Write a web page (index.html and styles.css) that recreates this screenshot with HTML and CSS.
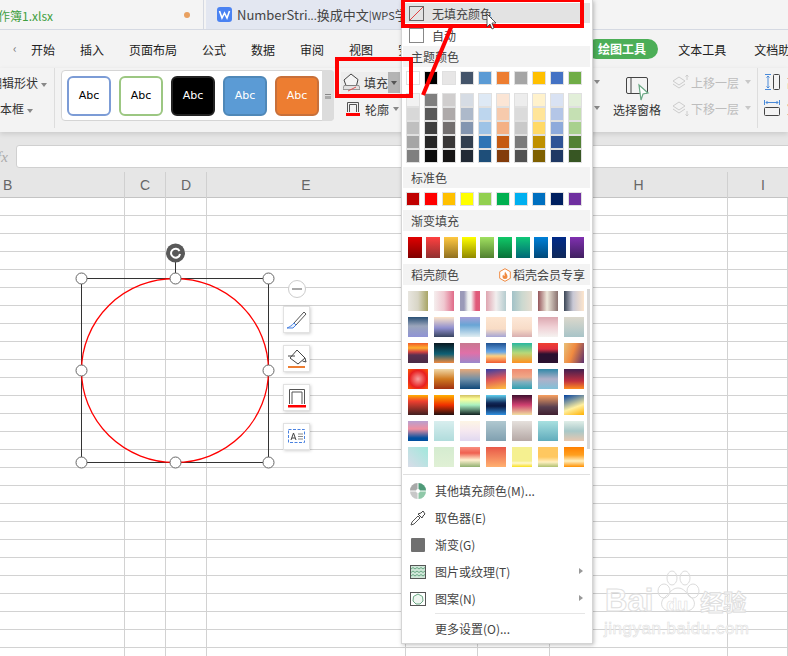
FILE: index.html
```html
<!DOCTYPE html>
<html lang="zh-CN">
<head>
    <meta charset="UTF-8">
    <title>工作簿1.xlsx</title>
    <link rel="stylesheet" href="styles.css">
</head>
<body>
<div class="app">
    <div class="title-bar">
        <div class="file-tab active">
            <span class="file-name">工作簿1.xlsx</span>
            <span class="dirty-dot"></span>
        </div>
        <div class="file-tab other">
            <svg class="wps-logo" width="15" height="15" viewBox="0 0 15 15"><rect width="15" height="15" rx="3" fill="#4a82f2"/><path d="M2.5 4l2.5 7 2.5-5 2.5 5 2.5-7" fill="none" stroke="#fff" stroke-width="1.6"/></svg>
            <span class="file-name-2">NumberStri<span class="tight">...</span>换成中文<span class="tight">|WPS</span>学</span>
        </div>
    </div>

    <div class="menu-tabs">
        <span class="back-arrow">‹</span>
        <span>开始</span><span>插入</span><span>页面布局</span><span>公式</span><span>数据</span><span>审阅</span><span>视图</span><span>安全</span>
        <span class="pill">绘图工具</span>
        <span class="after-pill">文本工具</span>
        <span class="last-tab">文档助手</span>
    </div>

    <div class="ribbon">
        <div class="edit-group">
            <div class="edit-item">编辑形状 <i class="caret"></i></div>
            <div class="edit-item second">文本框 <i class="caret"></i></div>
        </div>
        <div class="gallery">
            <div class="abc a1">Abc</div>
            <div class="abc a2">Abc</div>
            <div class="abc a3">Abc</div>
            <div class="abc a4">Abc</div>
            <div class="abc a5">Abc</div>
            <div class="gallery-scroll"><i></i></div>
        </div>
        <div class="fill-group">
            <div class="fill-btn">
                <span class="fill-main">
                    <svg width="17" height="19" viewBox="0 0 17 19"><path d="M8 1l7 5.500-1.500 6H3L1 7z" fill="#f4f4f4" stroke="#444"/><path d="M1 12.500h15l1 4H0z" fill="#e2e2e2" stroke="#777" stroke-width=".7"/><path d="M5 18l8-4" stroke="#e05050"/></svg>
                    填充
                </span>
                <span class="fill-drop"><i class="caret dark"></i></span>
            </div>
            <div class="line-btn">
                <svg width="16" height="16" viewBox="0 0 16 16"><path d="M2.500 11V1.500h11V11M4.500 11V3.500h7V11" fill="none" stroke="#555"/><rect x="1" y="12" width="14" height="3" fill="#f00"/></svg>
                轮廓 <i class="caret"></i>
            </div>
        </div>
        <div class="carets"><i class="caret"></i><i class="caret"></i></div>
        <div class="pane-btn">
            <svg width="26" height="26" viewBox="0 0 26 26"><rect x=".5" y=".5" width="21" height="16" rx="1.500" fill="none" stroke="#444"/><path d="M5 1v15" stroke="#444"/><path d="M13 8l9 8-5 1-2 6z" fill="#fff" stroke="#6aa884" stroke-width="1.200"/></svg>
            <span>选择窗格</span>
        </div>
        <div class="layer-group">
            <div class="layer-item">
                <svg width="17" height="17" viewBox="0 0 17 17"><path d="M1 7l6-4 6 4-6 4zM1 10l6 4 6-4" fill="none" stroke="#ccc"/><path d="M15 6V1M13.500 2.500L15 1l1.500 1.500" fill="none" stroke="#ccc"/></svg>
                上移一层 <i class="caret light"></i>
            </div>
            <div class="layer-item">
                <svg width="17" height="17" viewBox="0 0 17 17"><path d="M1 6l6-4 6 4-6 4zM1 9l6 4 6-4" fill="none" stroke="#ccc"/><path d="M15 11v5M13.500 14.500L15 16l1.500-1.500" fill="none" stroke="#ccc"/></svg>
                下移一层 <i class="caret light"></i>
            </div>
        </div>
        <div class="size-group">
            <div class="size-item">
                <svg width="17" height="17" viewBox="0 0 17 17"><path d="M1 .5h6M1 15.500h6M4 2v12M2.500 3.500L4 2l1.500 1.500M2.500 12.500L4 14l1.500-1.500" fill="none" stroke="#4a8ad8"/><rect x="9.500" y=".5" width="6" height="15" rx="1" fill="none" stroke="#444"/></svg>
                <span>高</span>
            </div>
            <div class="size-item">
                <svg width="17" height="17" viewBox="0 0 17 17"><path d="M.5 0v5M15.500 0v5M2 2.500h12M3.500 1L2 2.500 3.500 4M12.500 1L14 2.500 12.500 4" fill="none" stroke="#4a8ad8"/><rect x=".5" y="7.500" width="15" height="8" rx="1" fill="none" stroke="#444"/></svg>
                <span>宽</span>
            </div>
        </div>
    </div>

    <div class="formula-bar">
        <span class="fx">fx</span>
        <div class="formula-input"></div>
    </div>

    <div class="col-head">
        <div class="col left">B</div>
        <div class="col">C</div>
        <div class="col">D</div>
        <div class="col">E</div>
        <div class="col"></div>
        <div class="col"></div>
        <div class="col">H</div>
        <div class="col last">I</div>
    </div>

    <div class="sheet">
        <div class="cell-col"></div>
        <div class="cell-col"></div>
        <div class="cell-col"></div>
        <div class="cell-col"></div>
        <div class="cell-col"></div>
        <div class="cell-col"></div>
        <div class="cell-col"></div>
        <div class="cell-col"></div>

        <svg class="shape" width="230" height="240" viewBox="60 235 230 240">
            <rect x="81.500" y="278.500" width="187" height="184" fill="none" stroke="#333"/>
            <ellipse cx="175" cy="370.500" rx="93.500" ry="92" fill="none" stroke="#f00" stroke-width="1.300"/>
            <path d="M175.500 262v16" stroke="#333"/>
            <circle cx="175.500" cy="253" r="9.500" fill="#595959"/>
            <path d="M179.500 251a4.500 4.500 0 1 0 .5 3" fill="none" stroke="#fff" stroke-width="2"/>
            <g fill="#fff" stroke="#666">
                <circle cx="81.500" cy="278.500" r="5.500"/>
                <circle cx="175.500" cy="278.500" r="5.500"/>
                <circle cx="268.500" cy="278.500" r="5.500"/>
                <circle cx="81.500" cy="370.500" r="5.500"/>
                <circle cx="268.500" cy="370.500" r="5.500"/>
                <circle cx="81.500" cy="462.500" r="5.500"/>
                <circle cx="175.500" cy="462.500" r="5.500"/>
                <circle cx="268.500" cy="462.500" r="5.500"/>
            </g>
        </svg>

        <div class="float-tools">
            <div class="collapse"><i></i></div>
            <div class="tool">
                <svg width="22" height="22" viewBox="0 0 22 22"><path d="M8 14L18 3l2 2-10 11z" fill="#fff" stroke="#555"/><path d="M8 14l2 2-3 3H1c3-1 5-3 7-5z" fill="#e8f0fb" stroke="#4a82e0"/></svg>
            </div>
            <div class="tool">
                <svg width="20" height="22" viewBox="0 0 20 22"><path d="M10 2l8 8-7 6-8-6z" fill="#fff" stroke="#444"/><path d="M1 8h7M18 10l1 4M15.500 13l3.500 1" fill="none" stroke="#444"/><rect x="1" y="18" width="17" height="2" fill="#ed7d31"/></svg>
            </div>
            <div class="tool">
                <svg width="20" height="22" viewBox="0 0 20 22"><path d="M2.500 17V2.500h15V17M5 17V5h10v12" fill="none" stroke="#555"/><rect x="1" y="18" width="18" height="2.500" fill="#f00"/></svg>
            </div>
            <div class="tool">
                <svg width="20" height="18" viewBox="0 0 20 18"><rect x="1.500" y="1.500" width="16" height="13" fill="none" stroke="#4a82e0" stroke-dasharray="3 1.500"/><path d="M4 12l2.500-7L9 12M5 10h3" fill="none" stroke="#444"/><path d="M11 6h5M11 8.500h5M11 11h5" stroke="#888"/></svg>
            </div>
        </div>

        <div class="watermark">
            <svg class="paw" width="50" height="46" viewBox="0 0 50 46"><g fill="none" stroke="#dcdcdc"><ellipse cx="12" cy="21" rx="6" ry="7"/><ellipse cx="20" cy="8" rx="5" ry="7"/><ellipse cx="33" cy="8" rx="5" ry="7"/><ellipse cx="41" cy="21" rx="6" ry="7"/><path d="M26 18c-6 0-8 5-14 10-5 5-2 13 6 13 4 0 5-1 8-1s4 1 8 1c8 0 11-8 6-13-6-5-8-10-14-10z"/></g></svg>
            <div class="wm-main"><span>Bai</span><span class="wm-du">du</span><span class="wm-cn">经验</span></div>
            <div class="wm-url">jingyan.baidu.com</div>
        </div>
    </div>
</div>

<div class="fill-menu">
    <div class="menu-row hover">
        <svg width="15" height="15" viewBox="0 0 15 15"><rect x=".5" y=".5" width="14" height="14" fill="none" stroke="#666"/><path d="M1 14L14 1" stroke="#e04040"/></svg>
        <span>无填充颜色</span>
    </div>
    <div class="menu-row auto">
        <svg width="15" height="15" viewBox="0 0 15 15"><rect x=".5" y=".5" width="14" height="14" fill="#fff" stroke="#888"/></svg>
        <span>自动</span>
    </div>

    <div class="sec-head first">主题颜色</div>
    <div class="swatches theme">
        <i></i><i></i><i></i><i></i><i></i><i></i><i></i><i></i><i></i><i></i>
    </div>
    <div class="swatches tints">
        <i></i><i></i><i></i><i></i><i></i><i></i><i></i><i></i><i></i><i></i>
        <i></i><i></i><i></i><i></i><i></i><i></i><i></i><i></i><i></i><i></i>
        <i></i><i></i><i></i><i></i><i></i><i></i><i></i><i></i><i></i><i></i>
        <i></i><i></i><i></i><i></i><i></i><i></i><i></i><i></i><i></i><i></i>
        <i></i><i></i><i></i><i></i><i></i><i></i><i></i><i></i><i></i><i></i>
    </div>

    <div class="sec-head std-head">标准色</div>
    <div class="swatches standard">
        <i></i><i></i><i></i><i></i><i></i><i></i><i></i><i></i><i></i><i></i>
    </div>

    <div class="sec-head grad-head">渐变填充</div>
    <div class="gradients">
        <i></i><i></i><i></i><i></i><i></i><i></i><i></i><i></i><i></i><i></i>
    </div>

    <div class="sec-head shell-head">
        <span>稻壳颜色</span>
        <span class="vip">
            <svg width="12" height="14" viewBox="0 0 12 14"><path d="M6 .7l5.300 3v6.600L6 13.300.7 10.300V3.700z" fill="#fff" stroke="#f08a40"/><path d="M6 3.500c1 2 2.500 3 2.500 5A2.500 2.500 0 0 1 3.500 8.500c0-1 .5-1.500 1-2 0 1 .5 1.500 1 1.500 0-1.500 0-3 .5-4.500z" fill="#f08a40"/></svg>
            稻壳会员专享
        </span>
    </div>
    <div class="shell-wrap">
        <div class="shell">
            <i></i><i></i><i></i><i></i><i></i><i></i><i></i>
            <i></i><i></i><i></i><i></i><i></i><i></i><i></i>
            <i></i><i></i><i></i><i></i><i></i><i></i><i></i>
            <i></i><i></i><i></i><i></i><i></i><i></i><i></i>
            <i></i><i></i><i></i><i></i><i></i><i></i><i></i>
            <i></i><i></i><i></i><i></i><i></i><i></i><i></i>
            <i></i><i></i><i></i><i></i><i></i><i></i><i></i>
        </div>
        <div class="shell-scroll"></div>
    </div>

    <div class="menu-list">
        <div class="list-row">
            <svg width="16" height="16" viewBox="0 0 16 16"><path d="M7.500 0v7.500H0A7.500 7.500 0 0 1 7.500 0z" fill="#a8a8a8"/><path d="M8.500 0A7.500 7.500 0 0 1 16 7.500H8.500z" fill="#4f9a78"/><path d="M0 8.500h7.500V16A7.500 7.500 0 0 1 0 8.500z" fill="#c8c8c8"/><path d="M8.500 8.500H16A7.500 7.500 0 0 1 8.500 16z" fill="#8fc8a8"/><circle cx="8" cy="8" r="2" fill="#fff"/></svg>
            <span>其他填充颜色(M)...</span>
        </div>
        <div class="list-row">
            <svg width="16" height="16" viewBox="0 0 16 16"><path d="M1 15l1-3 6-6 2 2-6 6z" fill="#fff" stroke="#555"/><path d="M8 4l4 4 1-2 2-2-2-3-2 2z" fill="#fff" stroke="#444"/></svg>
            <span>取色器(E)</span>
        </div>
        <div class="list-row">
            <svg width="16" height="16" viewBox="0 0 16 16"><rect x="1" y="1" width="14" height="14" rx="1" fill="#707070"/></svg>
            <span>渐变(G)</span>
        </div>
        <div class="list-row">
            <svg width="16" height="16" viewBox="0 0 16 16"><rect x=".5" y="1.500" width="15" height="13" fill="#cfe6d8" stroke="#555"/><path d="M1 5l2-1.500 2 1.500 2-1.500 2 1.500 2-1.500 2 1.500 2-1.500M1 8.500L3 7l2 1.500L7 7l2 1.500L11 7l2 1.500L15 7M1 12l2-1.500L5 12l2-1.500L9 12l2-1.500L13 12l2-1.500" fill="none" stroke="#6aa884"/></svg>
            <span>图片或纹理(T)</span>
            <i class="arrow"></i>
        </div>
        <div class="list-row">
            <svg width="16" height="16" viewBox="0 0 16 16"><rect x=".5" y="1.500" width="15" height="13" fill="#fff" stroke="#555"/><path d="M8 3l4.500 2.500.5 4.500-3 3H6l-3-3 .5-4.500z" fill="#eef6f0" stroke="#6aa884"/></svg>
            <span>图案(N)</span>
            <i class="arrow"></i>
        </div>
        <div class="list-sep"></div>
        <div class="list-row plain"><span>更多设置(O)...</span></div>
    </div>
</div>

<!-- 红色标注 -->
<svg class="notes" width="788" height="656" viewBox="0 0 788 656">
    <g fill="none" stroke="#f00" stroke-width="4">
        <rect x="337" y="59" width="74" height="37"/>
        <rect x="403" y="0" width="179" height="26"/>
        <path d="M423 95L452 25"/>
    </g>
    <path d="M487 14v13l3-3 2 5 2-1-2-5h4z" fill="#fff" stroke="#333" stroke-width=".8"/>
</svg>
</body>
</html>
```

FILE: styles.css
```css
* {
    box-sizing: border-box;
}
body {
    margin: 0;
    width: 788px;
    height: 656px;
    overflow: hidden;
    position: relative;
    background-color: #fff;
    font-family: "Noto Sans CJK SC", "Liberation Sans", sans-serif;
    font-size: 12px;
    color: #333;
}
i {
    display: block;
    font-style: normal;
}
svg {
    display: block;
    flex-shrink: 0;
}
.app {
    display: flex;
    flex-direction: column;
    height: 656px;
}

/* 标题栏 */
.title-bar {
    display: flex;
    height: 30px;
    background-color: #f4f4f4;
    border-bottom: 1px solid #d5d9e2;
    overflow: hidden;
}
.file-tab {
    display: flex;
    align-items: center;
    height: 30px;
}
.file-tab.active {
    width: 204px;
    padding-right: 13px;
    justify-content: space-between;
    background-color: #f4f4f4;
    border-right: 1px solid #d5d9e2;
}
.file-name {
    margin-left: -14px;
    font-size: 12px;
    color: #3f9f3f;
    white-space: nowrap;
}
.dirty-dot {
    width: 6px;
    height: 6px;
    border-radius: 50%;
    background-color: #e8a060;
}
.file-tab.other {
    width: 195px;
    margin-left: 2px;
    padding-left: 11px;
    background-color: #e3e7f1;
    height: 29px;
    gap: 5px;
}
.file-name-2 {
    font-size: 13px;
    color: #444;
    white-space: nowrap;
}
.tight {
    font-size: 11px;
}

/* 菜单 */
.menu-tabs {
    display: flex;
    align-items: center;
    gap: 25px;
    height: 38px;
    padding-left: 31px;
    background-color: #f3f3f3;
    color: #222;
    position: relative;
    white-space: nowrap;
}
.menu-tabs span {
    flex-shrink: 0;
}
.back-arrow {
    position: absolute;
    left: 13px;
    top: 9px;
    color: #777;
}
.pill {
    margin-left: 139px;
    width: 72px;
    height: 20px;
    line-height: 20px;
    border-radius: 10px;
    text-align: center;
    background-color: #4cae57;
    color: #fff;
    font-weight: bold;
}
.after-pill {
    margin-left: -5px;
}
.last-tab {
    margin-left: 3px;
}

/* 功能区 */
.ribbon {
    display: flex;
    height: 64px;
    background-color: #f3f3f3;
    box-shadow: 0 2px 5px rgba(0, 0, 0, 0.12);
    position: relative;
    z-index: 1;
    overflow: hidden;
}
.caret {
    display: inline-block;
    width: 0;
    height: 0;
    border-left: 3.5px solid transparent;
    border-right: 3.5px solid transparent;
    border-top: 4px solid #888;
    vertical-align: middle;
}
.caret.dark {
    border-top-color: #555;
}
.caret.light {
    border-top-color: #c8c8c8;
}
.edit-group {
    width: 55px;
    height: 60px;
    border-right: 1px solid #ddd;
    flex-shrink: 0;
    white-space: nowrap;
    padding-top: 4px;
}
.edit-item {
    margin-left: -10px;
    height: 22px;
    line-height: 22px;
}
.edit-item.second {
    margin-left: -12px;
    margin-top: 4px;
}
.gallery {
    display: flex;
    align-items: center;
    gap: 8px;
    width: 273px;
    height: 51px;
    margin: 2px 0 0 6px;
    padding-left: 5px;
    background-color: #fff;
    border: 1px solid #d5d5d5;
    border-radius: 4px;
    flex-shrink: 0;
    position: relative;
}
.abc {
    width: 44px;
    height: 40px;
    line-height: 36px;
    text-align: center;
    border: 2px solid;
    border-radius: 6px;
    font-family: "DejaVu Sans", sans-serif;
    font-size: 11px;
}
.a1 { border-color: #7c9cd6; color: #000; background-color: #fff; }
.a2 { border-color: #9cc782; color: #000; background-color: #fff; }
.a3 { border-color: #222; color: #fff; background-color: #000; }
.a4 { border-color: #4f88b8; color: #fff; background-color: #5b9bd5; }
.a5 { border-color: #c8703a; color: #fff; background-color: #ed7d31; }
.gallery-scroll {
    position: absolute;
    right: -1px;
    top: -1px;
    bottom: -1px;
    width: 12px;
    background-color: #dcdcdc;
    border-radius: 0 4px 4px 0;
}
.gallery-scroll i {
    margin: 24px auto 0;
    width: 6px;
    height: 5px;
    border-top: 1px solid #888;
    border-bottom: 3px solid #aaa;
}
.fill-group {
    width: 64px;
    margin-left: 7px;
    flex-shrink: 0;
}
.fill-btn {
    display: flex;
    height: 21px;
    margin-top: 4px;
}
.fill-main {
    display: flex;
    align-items: center;
    gap: 4px;
    width: 47px;
    padding-left: 2px;
    background-color: #ededed;
}
.fill-drop {
    display: flex;
    align-items: center;
    justify-content: center;
    width: 12px;
    background-color: #b4b4b4;
}
.line-btn {
    display: flex;
    align-items: center;
    gap: 4px;
    margin: 5px 0 0 4px;
    height: 22px;
    white-space: nowrap;
}
/* 被下拉菜单盖住的部分只露出两个小箭头 */
.carets {
    display: flex;
    flex-direction: column;
    gap: 22px;
    width: 30px;
    margin-left: 189px;
    padding-top: 12px;
    flex-shrink: 0;
}
.pane-btn {
    width: 60px;
    margin-left: -17px;
    padding-top: 9px;
    flex-shrink: 0;
    display: flex;
    flex-direction: column;
    align-items: center;
    gap: 3px;
    white-space: nowrap;
}
.pane-btn span {
    line-height: 16px;
}
.pane-btn svg {
    margin-left: 3px;
    margin-bottom: -4px;
}
.layer-group {
    width: 85px;
    margin-left: 5px;
    padding-top: 1px;
    flex-shrink: 0;
}
.layer-item {
    display: flex;
    align-items: center;
    gap: 2px;
    height: 26px;
    color: #bdbdbd;
    white-space: nowrap;
}
.layer-item .caret {
    margin-left: 4px;
}
.size-group {
    border-left: 1px solid #ddd;
    height: 60px;
    padding: 1px 0 0 6px;
    flex-shrink: 0;
}
.size-item {
    display: flex;
    align-items: center;
    gap: 6px;
    height: 26px;
}

/* 编辑栏 */
.formula-bar {
    display: flex;
    align-items: flex-end;
    height: 36px;
    background-color: #e6e6e6;
}
.fx {
    width: 16px;
    height: 23px;
    line-height: 24px;
    margin-left: -3px;
    flex-shrink: 0;
    font-family: "Liberation Serif", serif;
    font-style: italic;
    font-size: 15px;
    color: #aaa;
}
.formula-input {
    flex: 1;
    height: 23px;
    margin-left: 3px;
    margin-right: -6px;
    background-color: #fff;
    border: 1px solid #d0d0d0;
    border-radius: 3px;
}

/* 表格 */
.col-head,
.sheet {
    display: grid;
    grid-template-columns: 125px 41px 41px 199px 72px 72px 178px 1fr;
}
.col-head {
    height: 30px;
    background-color: #e6e6e6;
    border-bottom: 1px solid #c4c4c4;
    margin-top: 0;
}
.col {
    margin-top: 4px;
    border-right: 1px solid #d0d0d0;
    text-align: center;
    line-height: 26px;
    font-family: "Liberation Sans", sans-serif;
    font-size: 14px;
    color: #666;
}
.col.left {
    text-align: left;
    padding-left: 3px;
}
.col.last {
    padding-left: 10px;
    border-right: 0;
}
.sheet {
    flex: 1;
    position: relative;
    background-image: repeating-linear-gradient(to bottom, transparent 0, transparent 17px, #d2d2d2 17px, #d2d2d2 18px);
}
.cell-col {
    border-right: 1px solid #d2d2d2;
}
.shape {
    position: absolute;
    left: 60px;
    top: 37px;
}
.float-tools {
    position: absolute;
    left: 283px;
    top: 82px;
    display: flex;
    flex-direction: column;
    align-items: center;
    gap: 12px;
}
.collapse {
    width: 18px;
    height: 18px;
    margin-bottom: -4px;
    background-color: #fff;
    border: 1px solid #ccc;
    border-radius: 50%;
    display: flex;
    align-items: center;
    justify-content: center;
}
.collapse i {
    width: 10px;
    height: 2px;
    background-color: #aaa;
}
.tool {
    display: flex;
    align-items: center;
    justify-content: center;
    width: 27px;
    height: 27px;
    background-color: #fff;
    border: 1px solid #e2e2e2;
    box-shadow: 1px 1px 3px rgba(0, 0, 0, 0.18);
}

/* 水印 */
.watermark {
    position: absolute;
    left: 604px;
    top: 372px;
    width: 146px;
    height: 76px;
    font-family: "Liberation Sans", sans-serif;
    color: rgba(255, 255, 255, 0.7);
    -webkit-text-stroke: 1px #e0e0e0;
    white-space: nowrap;
}
.paw {
    position: absolute;
    left: 48px;
    top: 0;
}
.wm-main {
    position: absolute;
    left: 1px;
    top: 13px;
    font-size: 31px;
    font-weight: bold;
    line-height: 36px;
}
.wm-du {
    margin-left: 13px;
    font-size: 18px;
    -webkit-text-stroke: 0.6px #e0e0e0;
}
.wm-cn {
    margin-left: 12px;
    font-family: "Noto Sans CJK SC", sans-serif;
    font-size: 23px;
}
.wm-url {
    position: absolute;
    left: 0;
    top: 49px;
    font-size: 17px;
    letter-spacing: 0.5px;
    -webkit-text-stroke: 0.6px #e0e0e0;
}

/* 填充下拉菜单 */
.fill-menu {
    position: absolute;
    left: 401px;
    top: 0;
    width: 192px;
    height: 644px;
    padding: 3px 2px 0 1px;
    background-color: #fff;
    border: 1px solid #d5d5d5;
    border-top: 0;
    box-shadow: 1px 1px 4px rgba(0, 0, 0, 0.25);
    color: #444;
    z-index: 2;
}
.menu-row {
    display: flex;
    align-items: center;
    gap: 8px;
    height: 20px;
    padding-left: 6px;
}
.menu-row.hover {
    background-color: #e3e3e3;
}
.menu-row.auto {
    margin-top: 3px;
    height: 18px;
}
.sec-head {
    display: flex;
    justify-content: space-between;
    align-items: center;
    height: 21px;
    padding: 0 5px 0 8px;
    background-color: #f3f3f3;
}
.sec-head.first {
    margin-top: 2px;
}
.sec-head.std-head {
    margin-top: 4px;
}
.sec-head.grad-head {
    margin-top: 4px;
}
.sec-head.shell-head {
    margin-top: 6px;
}
.vip {
    display: flex;
    align-items: center;
    gap: 2px;
}
.swatches {
    display: grid;
    grid-template-columns: repeat(10, 14px);
    column-gap: 4px;
    margin-left: 3px;
}
.swatches i {
    height: 14px;
    border: 1px solid #e0e0e0;
}
.theme {
    margin-top: 4px;
}
.tints {
    margin-top: 8px;
}
.standard {
    margin-top: 4px;
}
.theme i:nth-child(1) { background-color: #fff; }
.theme i:nth-child(2) { background-color: #000; }
.theme i:nth-child(3) { background-color: #e7e6e6; }
.theme i:nth-child(4) { background-color: #44546a; }
.theme i:nth-child(5) { background-color: #5b9bd5; }
.theme i:nth-child(6) { background-color: #ed7d31; }
.theme i:nth-child(7) { background-color: #a5a5a5; }
.theme i:nth-child(8) { background-color: #ffc000; }
.theme i:nth-child(9) { background-color: #4472c4; }
.theme i:nth-child(10) { background-color: #70ad47; }

.tints i:nth-child(1) { background-color: #f2f2f2; }
.tints i:nth-child(2) { background-color: #7f7f7f; }
.tints i:nth-child(3) { background-color: #d0cece; }
.tints i:nth-child(4) { background-color: #d6dce4; }
.tints i:nth-child(5) { background-color: #dee9f5; }
.tints i:nth-child(6) { background-color: #fbe5d5; }
.tints i:nth-child(7) { background-color: #ededed; }
.tints i:nth-child(8) { background-color: #fff2cc; }
.tints i:nth-child(9) { background-color: #d9e2f3; }
.tints i:nth-child(10) { background-color: #e2efd9; }
.tints i:nth-child(11) { background-color: #d8d8d8; }
.tints i:nth-child(12) { background-color: #595959; }
.tints i:nth-child(13) { background-color: #aeaaaa; }
.tints i:nth-child(14) { background-color: #adb9ca; }
.tints i:nth-child(15) { background-color: #bdd6ee; }
.tints i:nth-child(16) { background-color: #f7caac; }
.tints i:nth-child(17) { background-color: #dbdbdb; }
.tints i:nth-child(18) { background-color: #ffe599; }
.tints i:nth-child(19) { background-color: #b4c6e7; }
.tints i:nth-child(20) { background-color: #c5e0b3; }
.tints i:nth-child(21) { background-color: #bfbfbf; }
.tints i:nth-child(22) { background-color: #3f3f3f; }
.tints i:nth-child(23) { background-color: #747070; }
.tints i:nth-child(24) { background-color: #8496b0; }
.tints i:nth-child(25) { background-color: #9dc3e6; }
.tints i:nth-child(26) { background-color: #f4b083; }
.tints i:nth-child(27) { background-color: #c9c9c9; }
.tints i:nth-child(28) { background-color: #ffd966; }
.tints i:nth-child(29) { background-color: #8eaadb; }
.tints i:nth-child(30) { background-color: #a8d08d; }
.tints i:nth-child(31) { background-color: #a5a5a5; }
.tints i:nth-child(32) { background-color: #262626; }
.tints i:nth-child(33) { background-color: #3a3838; }
.tints i:nth-child(34) { background-color: #323f4f; }
.tints i:nth-child(35) { background-color: #2e74b5; }
.tints i:nth-child(36) { background-color: #c55a11; }
.tints i:nth-child(37) { background-color: #7b7b7b; }
.tints i:nth-child(38) { background-color: #bf9000; }
.tints i:nth-child(39) { background-color: #2f5496; }
.tints i:nth-child(40) { background-color: #538135; }
.tints i:nth-child(41) { background-color: #7f7f7f; }
.tints i:nth-child(42) { background-color: #0c0c0c; }
.tints i:nth-child(43) { background-color: #171616; }
.tints i:nth-child(44) { background-color: #222a35; }
.tints i:nth-child(45) { background-color: #1e4e79; }
.tints i:nth-child(46) { background-color: #833c0b; }
.tints i:nth-child(47) { background-color: #525252; }
.tints i:nth-child(48) { background-color: #7f6000; }
.tints i:nth-child(49) { background-color: #1f3864; }
.tints i:nth-child(50) { background-color: #375623; }

.standard i:nth-child(1) { background-color: #c00000; }
.standard i:nth-child(2) { background-color: #ff0000; }
.standard i:nth-child(3) { background-color: #ffc000; }
.standard i:nth-child(4) { background-color: #ffff00; }
.standard i:nth-child(5) { background-color: #92d050; }
.standard i:nth-child(6) { background-color: #00b050; }
.standard i:nth-child(7) { background-color: #00b0f0; }
.standard i:nth-child(8) { background-color: #0070c0; }
.standard i:nth-child(9) { background-color: #002060; }
.standard i:nth-child(10) { background-color: #7030a0; }

.gradients {
    display: grid;
    grid-template-columns: repeat(10, 14px);
    column-gap: 4px;
    margin: 6px 0 0 5px;
}
.gradients i {
    height: 21px;
}
.gradients i:nth-child(1) { background: linear-gradient(#e00000, #800000); }
.gradients i:nth-child(2) { background: linear-gradient(#ff4040, #903030); }
.gradients i:nth-child(3) { background: linear-gradient(#ffc840, #907020); }
.gradients i:nth-child(4) { background: linear-gradient(#ffff00, #908800); }
.gradients i:nth-child(5) { background: linear-gradient(#a0e060, #508030); }
.gradients i:nth-child(6) { background: linear-gradient(#10c868, #087038); }
.gradients i:nth-child(7) { background: linear-gradient(#10c878, #006878); }
.gradients i:nth-child(8) { background: linear-gradient(#0080d8, #004878); }
.gradients i:nth-child(9) { background: linear-gradient(#002a88, #102858); }
.gradients i:nth-child(10) { background: linear-gradient(#8030b0, #402060); }

.shell-wrap {
    position: relative;
    height: 189px;
    padding: 6px 0 0 5px;
}
.shell {
    display: grid;
    grid-template-columns: repeat(7, 20px);
    grid-auto-rows: 20px;
    gap: 6px;
}
.shell-scroll {
    position: absolute;
    right: 0;
    top: 4px;
    width: 3px;
    height: 160px;
    background-color: #d8d8d8;
}
.shell i:nth-child(1) { background: linear-gradient(90deg, #e8e6e0, #d8d5c5, #a8a565); }
.shell i:nth-child(2) { background: linear-gradient(90deg, #f5eeee, #f0c8d0, #e06a88); }
.shell i:nth-child(3) { background: linear-gradient(90deg, #9a9ab8 20%, #eef0ee 40%, #f5f5f5 55%, #e05a7a 80%); }
.shell i:nth-child(4) { background: linear-gradient(90deg, #dfa5b0, #f2eeee 50%, #b5cccf); }
.shell i:nth-child(5) { background: linear-gradient(90deg, #a2c2c8, #cbd8cf 50%, #e6ddd0); }
.shell i:nth-child(6) { background: linear-gradient(90deg, #94555a, #efe9dc 45%, #8a7270); }
.shell i:nth-child(7) { background: linear-gradient(90deg, #3a4555, #c8c8d5 45%, #fde5cc); }
.shell i:nth-child(8) { background: linear-gradient(#2a5075, #9aa5bb 45%, #8f93d5); }
.shell i:nth-child(9) { background: linear-gradient(#fde3c8, #8f8fcf 55%, #3a4560); }
.shell i:nth-child(10) { background: linear-gradient(#a8a0d8, #68a5d5 40%, #e0eef2); }
.shell i:nth-child(11) { background: linear-gradient(#fde5d0, #f8dcc5 60%, #a5a5d5); }
.shell i:nth-child(12) { background: linear-gradient(#fde8d8, #f8dcc8 60%, #d8aeb0); }
.shell i:nth-child(13) { background: linear-gradient(#dca8b0, #f0d0d5 50%, #f5f2f0); }
.shell i:nth-child(14) { background: linear-gradient(#dcd8cc, #a8c4c8); }
.shell i:nth-child(15) { background: linear-gradient(#f05a28, #ffb030 25%, #d04040 45%, #5a3050 60%, #4a2a45); }
.shell i:nth-child(16) { background: linear-gradient(#0a1a22, #0e6075 55%, #f08a40); }
.shell i:nth-child(17) { background: linear-gradient(#c87890, #e070a8 50%, #9a88cc); }
.shell i:nth-child(18) { background: linear-gradient(#1f5090, #68a8e8 45%, #ffd080 65%, #f05a30); }
.shell i:nth-child(19) { background: linear-gradient(#28b8a0, #b8d878 50%, #ff9020); }
.shell i:nth-child(20) { background: linear-gradient(#f04030, #e03040 30%, #2a1030 55%, #2a1230); }
.shell i:nth-child(21) { background: linear-gradient(110deg, #e8c078, #f08a40 45%, #5a3070); }
.shell i:nth-child(22) { background: radial-gradient(circle, #f8a0a0, #e82020 60%, #ff6000); }
.shell i:nth-child(23) { background: linear-gradient(#f0d8a8, #d07a20 50%, #a03010); }
.shell i:nth-child(24) { background: linear-gradient(#e8a878, #7090a8 50%, #104878); }
.shell i:nth-child(25) { background: linear-gradient(170deg, #3040a8, #e05858 50%, #ffc040); }
.shell i:nth-child(26) { background: linear-gradient(#f08a70, #f0a888 40%, #80b0c0 65%, #30a0b0); }
.shell i:nth-child(27) { background: linear-gradient(#3088a8, #b0b0c8 50%, #80c0d8); }
.shell i:nth-child(28) { background: linear-gradient(#402050, #c03040 60%, #ff9020); }
.shell i:nth-child(29) { background: linear-gradient(#ffb000, #f04030 30%, #402020); }
.shell i:nth-child(30) { background: linear-gradient(#ffb000, #f03000 50%, #201010); }
.shell i:nth-child(31) { background: linear-gradient(#d0c060, #ffff9a 20%, #a8f0c0 50%, #102020); }
.shell i:nth-child(32) { background: linear-gradient(#60d0f0, #102858 40%, #0a1840 55%, #3090e0); }
.shell i:nth-child(33) { background: linear-gradient(#401030, #d04070 50%, #f0e0a0); }
.shell i:nth-child(34) { background: linear-gradient(#f8a060, #5a4050 60%, #402030); }
.shell i:nth-child(35) { background: linear-gradient(160deg, #0040a0, #fff0a0 60%, #ffb000); }
.shell i:nth-child(36) { background: linear-gradient(#b8a0d0, #f090a0 40%, #0050a0 85%); }
.shell i:nth-child(37) { background: linear-gradient(#d8eeee, #b0dcdc); }
.shell i:nth-child(38) { background: linear-gradient(#fdf5e5, #f5e8f0 50%, #e0d8f0); }
.shell i:nth-child(39) { background: linear-gradient(#b0c8d0, #80a0b0); }
.shell i:nth-child(40) { background: linear-gradient(#e5e0dc, #b5a8a5); }
.shell i:nth-child(41) { background: linear-gradient(#a8e0e0, #60acbc); }
.shell i:nth-child(42) { background: linear-gradient(#e0eee8, #a8c8c8 50%, #e8c8b0); }
.shell i:nth-child(43) { background: linear-gradient(45deg, #d8dce8, #a0e8dc); }
.shell i:nth-child(44) { background: linear-gradient(#d5ecd0, #e0f0d5); }
.shell i:nth-child(45) { background: linear-gradient(#f89080, #f06050 30%, #fff0d0 65%, #90b070); }
.shell i:nth-child(46) { background: linear-gradient(#e85848, #ffb070); }
.shell i:nth-child(47) { background: linear-gradient(#f5f090 70%, #fff8d0 80%, #f8e020); }
.shell i:nth-child(48) { background: linear-gradient(#ffc860 50%, #fff0c0 75%, #b0c070); }
.shell i:nth-child(49) { background: linear-gradient(#ff8000, #ffa020 40%, #fff0c0 70%, #ff9000); }

.menu-list {
    border-top: 1px solid #e0e0e0;
    padding-top: 2px;
}
.list-row {
    display: flex;
    align-items: center;
    gap: 9px;
    height: 27px;
    padding: 0 5px 0 7px;
    position: relative;
}
.list-row.plain {
    padding-left: 32px;
    height: 28px;
}
.arrow {
    position: absolute;
    right: 7px;
    top: 10px;
    border-left: 4px solid #999;
    border-top: 3.5px solid transparent;
    border-bottom: 3.5px solid transparent;
}
.list-sep {
    margin: 1px 5px 0 32px;
    border-top: 1px solid #e6e6e6;
}

/* 标注层 */
.notes {
    position: absolute;
    left: 0;
    top: 0;
    z-index: 3;
    pointer-events: none;
}
```
